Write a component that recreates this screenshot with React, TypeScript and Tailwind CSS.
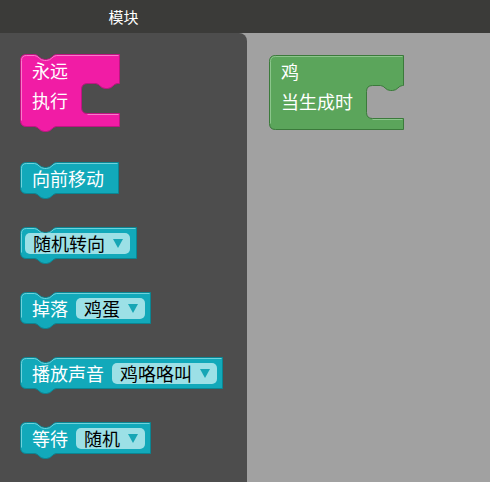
import type { ReactNode } from 'react';

type Mouth = { x: number; top: number; bottom: number };

// notch: a 22px wide dip/bump, drawn left to right or right to left
const dip = (x: number, y: number, d: number) =>
  `L ${x} ${y} C ${x + 4} ${y} ${x + 5} ${y + d} ${x + 10} ${y + d} L ${x + 12} ${y + d} C ${x + 17} ${y + d} ${x + 18} ${y} ${x + 22} ${y} `;
const dipBack = (x: number, y: number, d: number) =>
  `L ${x + 22} ${y} C ${x + 18} ${y} ${x + 17} ${y + d} ${x + 12} ${y + d} L ${x + 10} ${y + d} C ${x + 5} ${y + d} ${x + 4} ${y} ${x} ${y} `;

function outline(w: number, h: number, notch: boolean, mouth?: Mouth) {
  const r = 6;
  let d = `M 0 ${r} Q 0 0 ${r} 0 `;
  if (notch) d += dip(14, 0, 5);
  d += `L ${w} 0 `;
  if (mouth) {
    d += `L ${w} ${mouth.top} `;
    d += dipBack(mouth.x + 14, mouth.top, 5);
    d += `L ${mouth.x + r} ${mouth.top} Q ${mouth.x} ${mouth.top} ${mouth.x} ${mouth.top + r} `;
    d += `L ${mouth.x} ${mouth.bottom - r} Q ${mouth.x} ${mouth.bottom} ${mouth.x + r} ${mouth.bottom} L ${w} ${mouth.bottom} `;
  }
  d += `L ${w} ${h} `;
  if (notch) d += dipBack(14, h, 5);
  d += `L ${r} ${h} Q 0 ${h} 0 ${h - r} Z`;
  return d;
}

function highlight(w: number, h: number, notch: boolean, mouth?: Mouth) {
  const r = 6;
  let d = `M 1 ${h - r} L 1 ${r} Q 1 1 ${r} 1 `;
  if (notch) d += dip(14, 1, 5);
  d += `L ${w - 1} 1 `;
  if (mouth) d += `M ${mouth.x + r} ${mouth.bottom + 1} L ${w - 1} ${mouth.bottom + 1}`;
  return d;
}

type BlockProps = {
  w: number;
  h: number;
  fill: string;
  light: string;
  dark: string;
  notch?: boolean;
  mouth?: Mouth;
  className: string;
  children: ReactNode;
};

function Block({ w, h, fill, light, dark, notch = true, mouth, className, children }: BlockProps) {
  const iw = w - 1;
  const ih = h - 1;
  return (
    <div className={`relative shrink-0 ${className}`}>
      <svg className="absolute left-0 top-0 overflow-visible" width={w} height={h + 6}>
        <g transform="translate(0.5 0.5)">
          <path d={outline(iw, ih, notch, mouth)} fill={fill} stroke={dark} strokeWidth={1} />
          <path d={highlight(iw, ih, notch, mouth)} fill="none" stroke={light} strokeWidth={1} />
        </g>
      </svg>
      <div className="relative h-full">{children}</div>
    </div>
  );
}

const cyan = { fill: '#12a9ba', light: '#6fd2dc', dark: '#0a8693' };

function Dropdown({ label }: { label: string }) {
  return (
    <div className="flex h-[21px] items-center gap-2 rounded-[5px] bg-[#9ce0e6] pl-2 pr-[7px] text-[18px] leading-none text-black">
      <span>{label}</span>
      <svg width="10" height="9" viewBox="0 0 10 9">
        <path d="M0 0 H10 L5 9 Z" fill="#17a6b5" />
      </svg>
    </div>
  );
}

export default function App() {
  return (
    <div className="h-[482px] w-[490px] overflow-hidden bg-[#a1a1a1] font-['Noto_Sans_CJK_SC',sans-serif] text-white">
      {/* Header */}
      <div className="flex h-[33px] bg-[#3b3b39]">
        <div className="w-[247px] text-center text-[15px] leading-[33px] text-white">模块</div>
      </div>

      <div className="flex h-[449px]">
        {/* Flyout */}
        <div className="flex w-[247px] flex-col items-start rounded-tr-[8px] bg-[#4d4d4d] pl-5 pt-[21px]">
          <Block
            w={100}
            h={73}
            fill="#f11ca5"
            light="#f77cc9"
            dark="#bf1583"
            mouth={{ x: 61, top: 29, bottom: 59 }}
            className="mb-[35px] h-[73px] w-[100px]"
          >
            <div className="pl-3 pt-[1px] text-[18px]">
              <div className="h-[30px] leading-[30px]">永远</div>
              <div className="h-[30px] leading-[30px]">执行</div>
            </div>
          </Block>

          <Block w={99} h={32} {...cyan} className="mb-[33px] h-[32px] w-[99px]">
            <div className="flex h-full items-center pl-3 text-[18px]">向前移动</div>
          </Block>

          <Block w={117} h={32} {...cyan} className="mb-[33px] h-[32px] w-[117px]">
            <div className="flex h-full items-center pl-[5px]">
              <Dropdown label="随机转向" />
            </div>
          </Block>

          <Block w={131} h={32} {...cyan} className="mb-[33px] h-[32px] w-[131px]">
            <div className="flex h-full items-center gap-2 pl-3 text-[18px]">
              <span>掉落</span>
              <Dropdown label="鸡蛋" />
            </div>
          </Block>

          <Block w={203} h={32} {...cyan} className="mb-[33px] h-[32px] w-[203px]">
            <div className="flex h-full items-center gap-2 pl-3 text-[18px]">
              <span>播放声音</span>
              <Dropdown label="鸡咯咯叫" />
            </div>
          </Block>

          <Block w={131} h={32} {...cyan} className="h-[32px] w-[131px]">
            <div className="flex h-full items-center gap-2 pl-3 text-[18px]">
              <span>等待</span>
              <Dropdown label="随机" />
            </div>
          </Block>
        </div>

        {/* Workspace */}
        <div className="flex-1 pl-[22px] pt-[22px]">
          <Block
            w={135}
            h={75}
            fill="#5ba55b"
            light="#8cc58c"
            dark="#3b7a3b"
            notch={false}
            mouth={{ x: 97, top: 30, bottom: 63 }}
            className="h-[75px] w-[135px]"
          >
            <div className="pl-3 pt-[1px] text-[18px]">
              <div className="h-[30px] leading-[30px]">鸡</div>
              <div className="h-[30px] leading-[30px]">当生成时</div>
            </div>
          </Block>
        </div>
      </div>
    </div>
  );
}
